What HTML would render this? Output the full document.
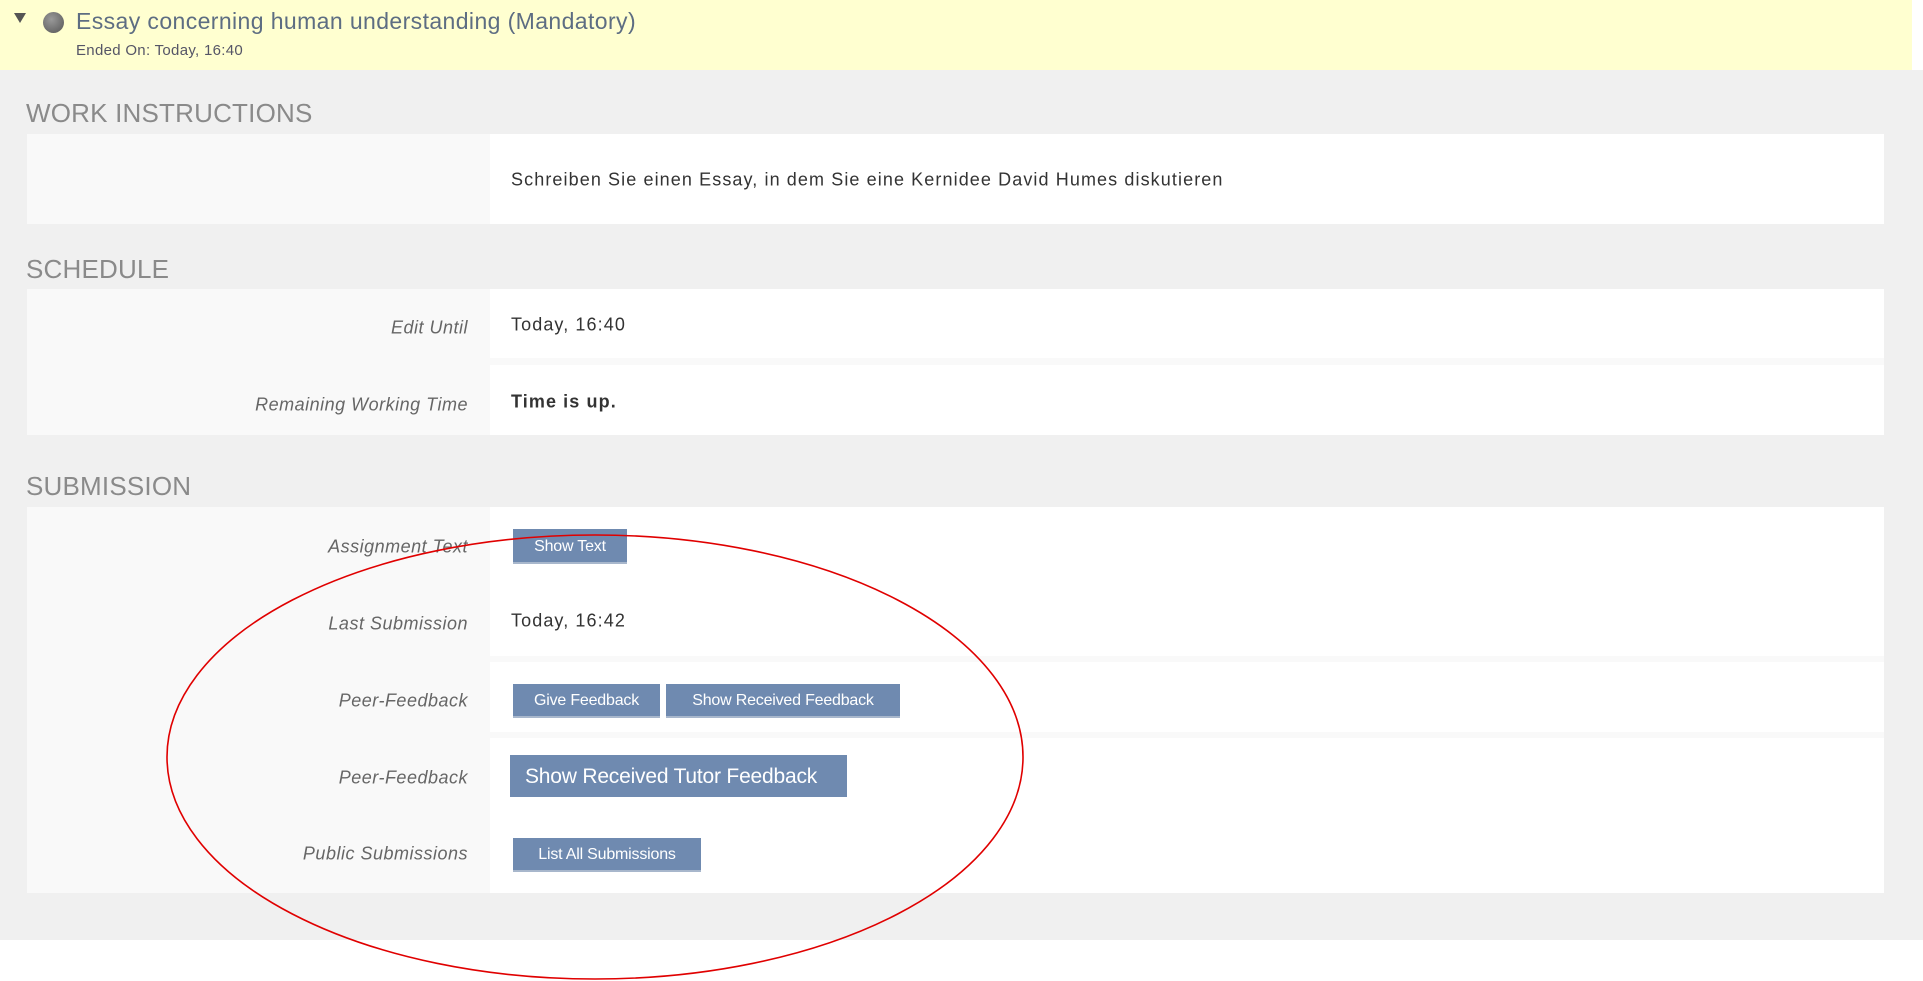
<!DOCTYPE html>
<html><head><meta charset="utf-8"><style>
*{margin:0;padding:0;box-sizing:border-box}
body{width:1923px;height:981px;background:#fff;font-family:"Liberation Sans",sans-serif;position:relative;overflow:hidden}
.abs{position:absolute}
#gray{left:0;top:70px;width:1923px;height:870px;background:#f0f0f0}
#yel{left:0;top:0;width:1912px;height:70px;background:#ffffd0}
.h{color:#8a8a8a;font-size:26px;left:26px;letter-spacing:0.2px}
.panel{left:27px;width:1857px;background:#fff}
.lab{left:27px;width:463px;background:#f9f9f9}
.l{position:absolute;right:1455px;font-style:italic;color:#666;font-size:18px;text-align:right;white-space:nowrap;transform:translateY(-50%);letter-spacing:0.5px}
.v{position:absolute;left:511px;font-size:18px;color:#333;transform:translateY(-50%);white-space:nowrap;letter-spacing:1.1px}
.btn{position:absolute;background:#6f8ab0;color:#fff;font-size:16px;display:flex;align-items:center;justify-content:center;border-bottom:2px solid #a8b7cc;letter-spacing:-0.2px;padding-top:2px}
</style></head><body>
<div class="abs" id="gray"></div>
<div class="abs" id="yel"></div>
<div class="abs" style="left:14px;top:13px;width:0;height:0;border-left:6px solid transparent;border-right:6px solid transparent;border-top:10px solid #555"></div>
<div class="abs" style="left:43px;top:12px;width:21px;height:21px;border-radius:50%;background:radial-gradient(circle at 40% 35%,#999,#555)"></div>
<div class="abs" style="left:76px;top:8px;font-size:23px;color:#5d6d82;white-space:nowrap;letter-spacing:0.4px">Essay concerning human understanding (Mandatory)</div>
<div class="abs" style="left:76px;top:42px;font-size:15px;color:#556;white-space:nowrap;letter-spacing:0.3px">Ended On: Today, 16:40</div>

<div class="abs h" style="top:98px">WORK INSTRUCTIONS</div>
<div class="abs panel" style="top:134px;height:90px"></div>
<div class="abs lab" style="top:134px;height:90px"></div>
<div class="v" style="top:180px">Schreiben Sie einen Essay, in dem Sie eine Kernidee David Humes diskutieren</div>

<div class="abs h" style="top:254px">SCHEDULE</div>
<div class="abs panel" style="top:289px;height:69px"></div>
<div class="abs panel" style="top:365px;height:70px"></div>
<div class="abs" style="left:27px;top:289px;width:1857px;height:146px;background:#f9f9f9;clip-path:inset(0 1394px 0 0)"></div>
<div class="abs" style="left:490px;top:358px;width:1394px;height:7px;background:#f9f9f9"></div>
<div class="l" style="top:328px">Edit Until</div>
<div class="v" style="top:325px">Today, 16:40</div>
<div class="l" style="top:405px">Remaining Working Time</div>
<div class="v" style="top:402px;font-weight:bold">Time is up.</div>

<div class="abs h" style="top:471px">SUBMISSION</div>
<div class="abs panel" style="top:507px;height:386px"></div>
<div class="abs lab" style="top:507px;height:386px"></div>
<div class="abs" style="left:490px;top:656px;width:1394px;height:6px;background:#f9f9f9"></div>
<div class="abs" style="left:490px;top:732px;width:1394px;height:6px;background:#f9f9f9"></div>
<div class="l" style="top:547px">Assignment Text</div>
<div class="btn" style="left:513px;top:529px;width:114px;height:35px">Show Text</div>
<div class="l" style="top:624px">Last Submission</div>
<div class="v" style="top:621px">Today, 16:42</div>
<div class="l" style="top:701px">Peer-Feedback</div>
<div class="btn" style="left:513px;top:684px;width:147px;height:34px">Give Feedback</div>
<div class="btn" style="left:666px;top:684px;width:234px;height:34px">Show Received Feedback</div>
<div class="l" style="top:778px">Peer-Feedback</div>
<div class="btn" style="left:510px;top:755px;width:337px;height:42px;font-size:21px;justify-content:flex-start;padding-left:15px;border:none">Show Received Tutor Feedback</div>
<div class="l" style="top:854px">Public Submissions</div>
<div class="btn" style="left:513px;top:838px;width:188px;height:34px">List All Submissions</div>

<svg class="abs" style="left:0;top:0" width="1923" height="981"><ellipse cx="595" cy="757" rx="428" ry="222" fill="none" stroke="#e00000" stroke-width="1.6"/></svg>
</body></html>
